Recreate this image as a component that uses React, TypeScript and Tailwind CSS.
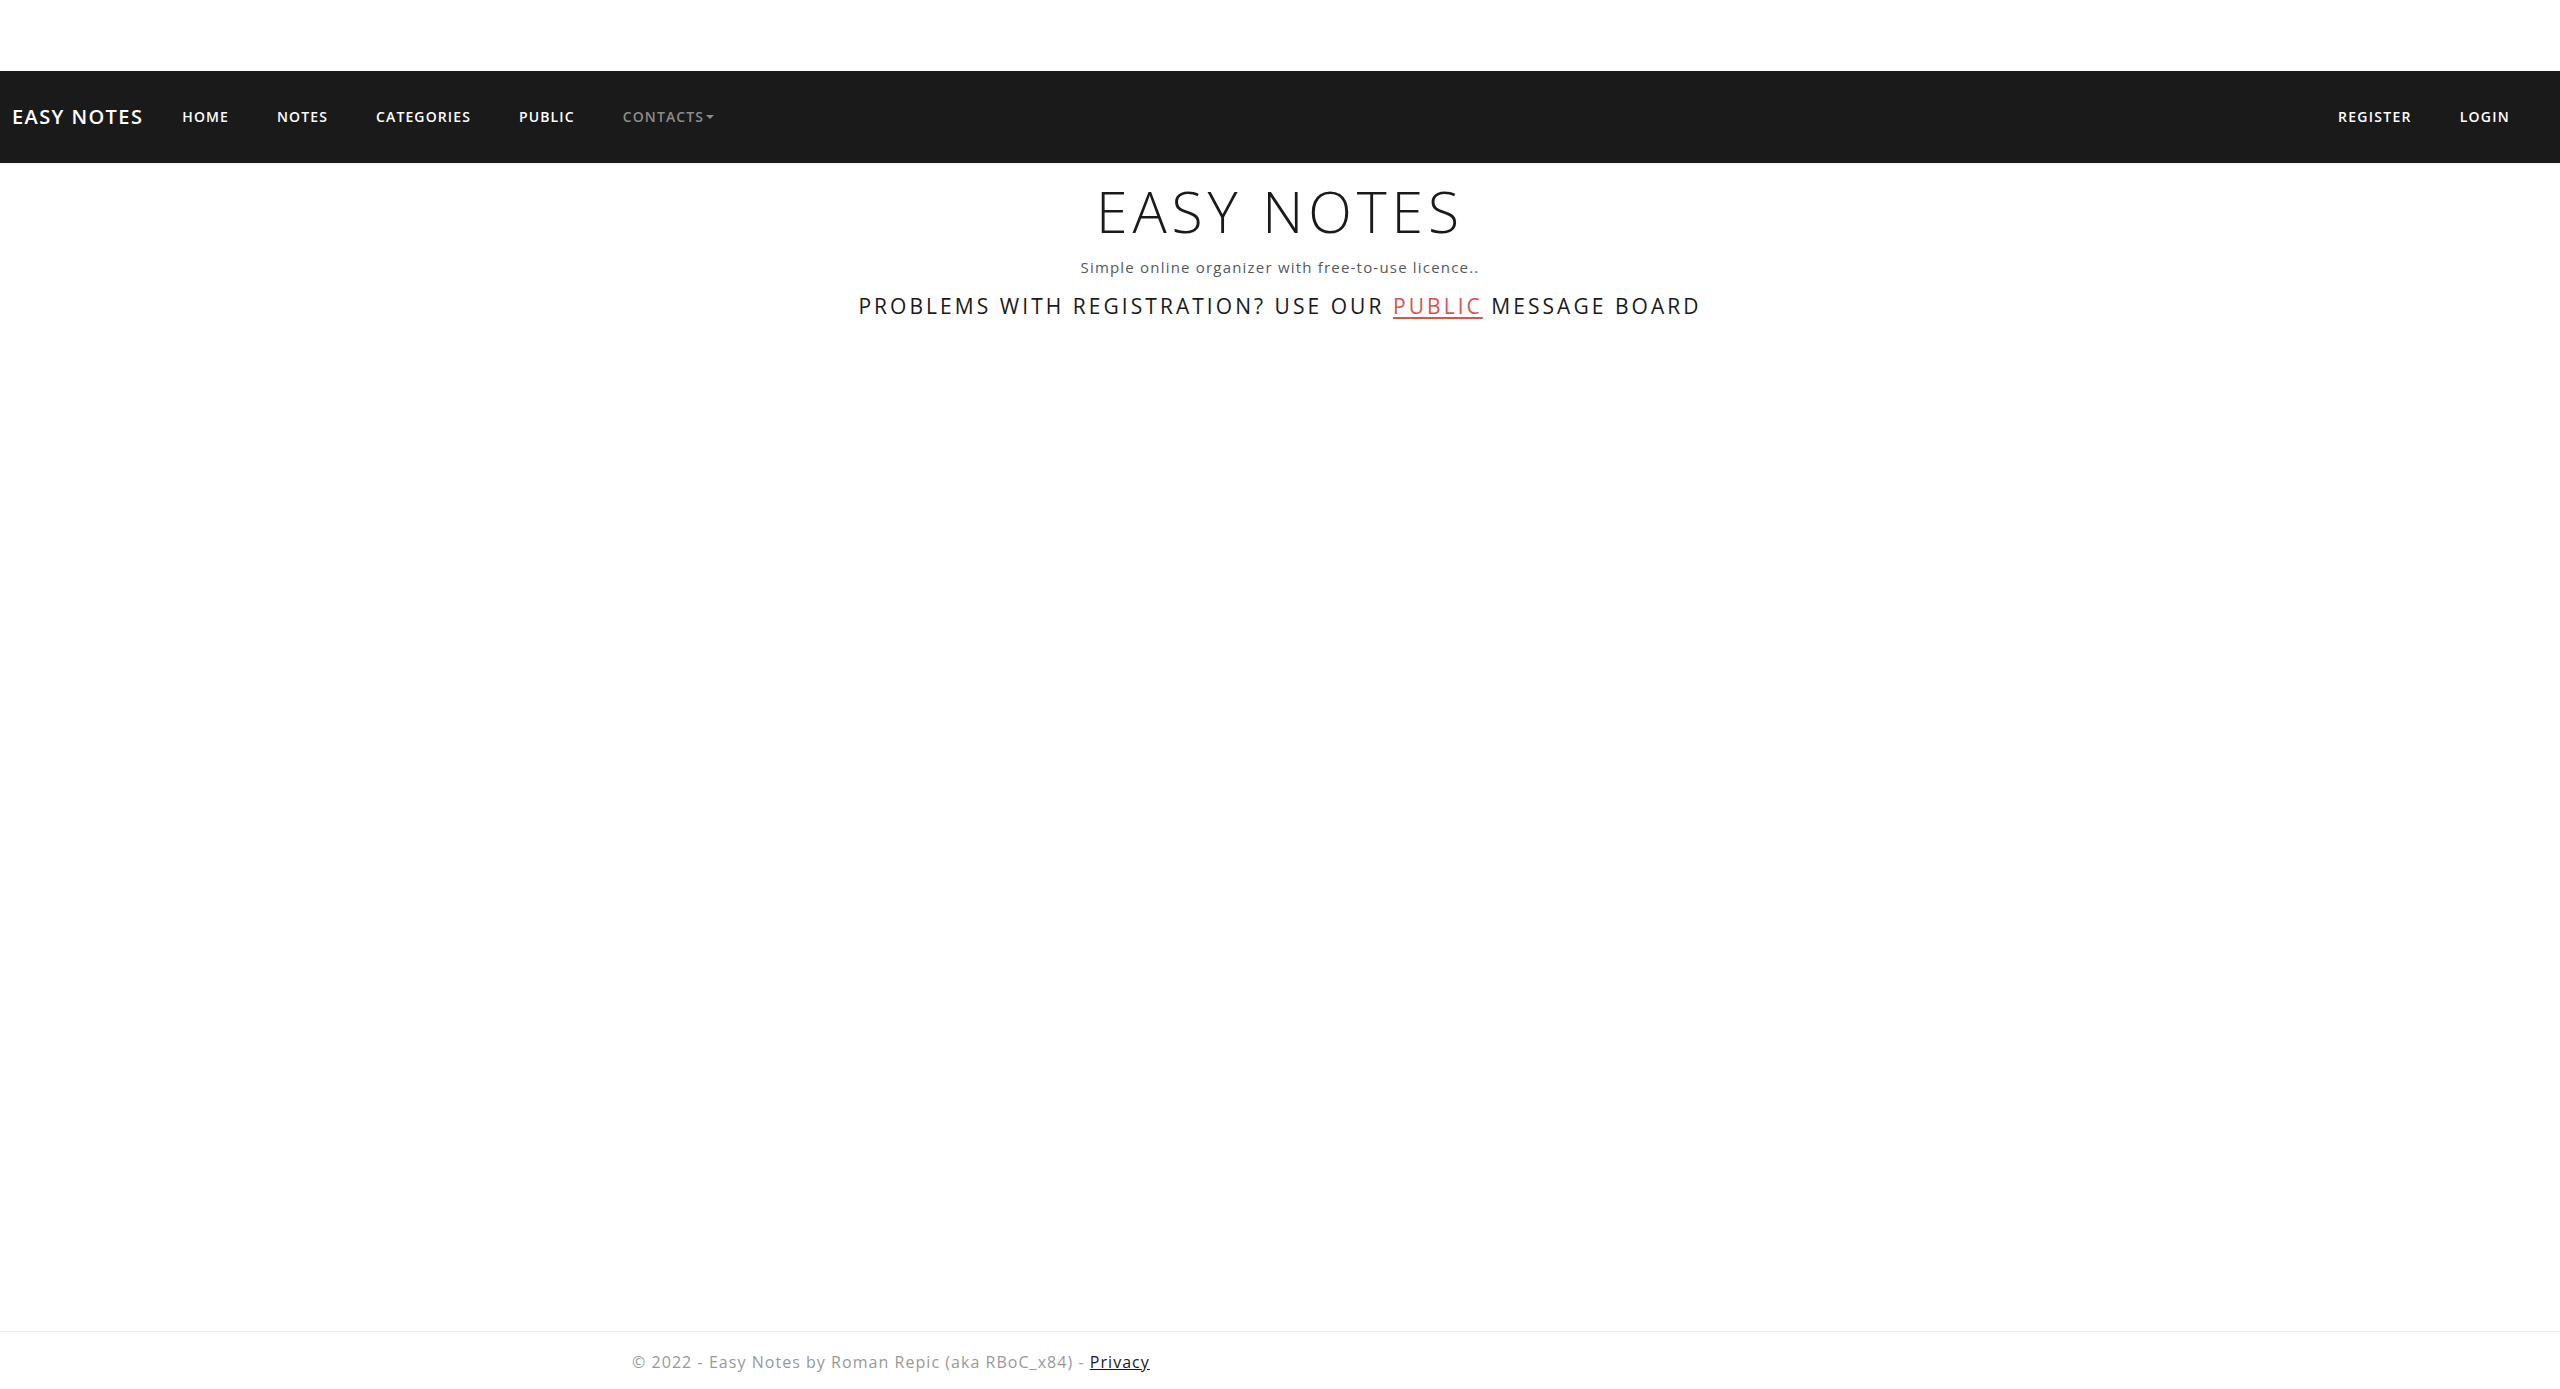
import React from "react";

const font = { fontFamily: '"Open Sans", "Noto Sans", Arial, sans-serif' };

export default function App() {
  const links = ["HOME", "NOTES", "CATEGORIES", "PUBLIC"];
  return (
    <div className="h-screen flex flex-col bg-white" style={font}>
      <div className="h-[71px] shrink-0 bg-white" />
      <nav className="h-[92px] shrink-0 bg-[#1a1a1a] flex items-center pl-3 pr-[26px] shadow-[0_2px_3px_rgba(0,0,0,0.04)]">
        <a className="text-[20px] font-semibold tracking-[0.07em] text-white mr-[15px] leading-none">
          EASY NOTES
        </a>
        <ul className="flex items-center">
          {links.map((l) => (
            <li key={l}>
              <a className="block px-6 text-[14px] font-semibold tracking-[0.08em] text-white leading-none">
                {l}
              </a>
            </li>
          ))}
          <li>
            <a className="flex items-center px-6 text-[14px] font-semibold tracking-[0.08em] text-[#8c8c8c] leading-none">
              CONTACTS
              <span className="ml-[2px] inline-block w-0 h-0 border-l-[4px] border-r-[4px] border-t-[4px] border-l-transparent border-r-transparent border-t-[#8c8c8c]" />
            </a>
          </li>
        </ul>
        <ul className="ml-auto flex items-center">
          <li>
            <a className="block px-6 text-[14px] font-semibold tracking-[0.09em] text-white leading-none">REGISTER</a>
          </li>
          <li>
            <a className="block px-6 text-[14px] font-semibold tracking-[0.09em] text-white leading-none">LOGIN</a>
          </li>
        </ul>
      </nav>
      <main className="flex-1 pt-[14px] text-center">
        <h1 className="text-[57px] leading-[68px] font-light tracking-[0.086em] text-[#1a1a1a]">EASY NOTES</h1>
        <p className="mt-[12px] text-[15px] leading-[21px] tracking-[0.08em] text-[#55595c]">
          Simple online organizer with free-to-use licence..
        </p>
        <h4 className="mt-[14px] text-[21px] leading-[28px] tracking-[0.145em] text-[#1a1a1a]">
          PROBLEMS WITH REGISTRATION? USE OUR{" "}
          <a className="text-[#d9534f] underline underline-offset-[3px]">PUBLIC</a> MESSAGE BOARD
        </h4>
      </main>
      <footer className="h-[58px] shrink-0 border-t border-[#e9e9e9]">
        <div className="mx-auto w-[1320px] px-3 pt-[18px] text-[16px] leading-[24px] tracking-[0.065em] text-[#999999]">
          © 2022 - Easy Notes by Roman Repic (aka RBoC_x84) -{" "}
          <a className="text-[#1a1a1a] underline">Privacy</a>
        </div>
      </footer>
    </div>
  );
}
